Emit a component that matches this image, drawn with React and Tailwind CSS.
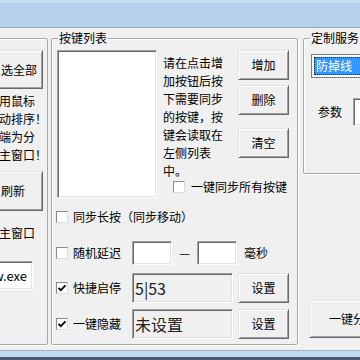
import React from "react";

const font = { fontFamily: '"Noto Sans CJK SC", "Noto Sans", sans-serif' };

const Btn = ({ children, className = "" }) => (
  <div
    className={`flex items-center justify-center bg-[#f0f0f0] text-[12px] text-black border border-t-[#e3e3e3] border-l-[#e3e3e3] border-r-[#696969] border-b-[#696969] shadow-[inset_1px_1px_0_#ffffff,inset_-1px_-1px_0_#a0a0a0] ${className}`}
  >
    {children}
  </div>
);

const Sunken = ({ children, className = "" }) => (
  <div
    className={`border border-t-[#a0a0a0] border-l-[#a0a0a0] border-r-white border-b-white shadow-[inset_1px_1px_0_#696969,inset_-1px_-1px_0_#e3e3e3] ${className}`}
  >
    {children}
  </div>
);

const Check = ({ checked }) => (
  <div className="w-[12px] h-[12px] shrink-0 bg-white border border-t-[#8a8a8a] border-l-[#8a8a8a] border-r-[#dcdcdc] border-b-[#dcdcdc] flex items-center justify-center">
    {checked && (
      <svg width="10" height="10" viewBox="0 0 10 10">
        <path d="M1.5 4.8 L3.8 7.2 L8.5 2.4" stroke="#000" strokeWidth="1.8" fill="none" />
      </svg>
    )}
  </div>
);

const Group = ({ title, className = "", children }) => (
  <fieldset
    className={`border border-[#a8a8a8] rounded-[2px] shadow-[inset_1px_1px_0_#ffffff,1px_1px_0_#ffffff] ${className}`}
  >
    {title && (
      <legend className="ml-[6px] px-[1px] text-[12px] leading-[14px] text-black">{title}</legend>
    )}
    {children}
  </fieldset>
);

export default function App() {
  const tip = ["请在点击增", "加按钮后按", "下需要同步", "的按键，按", "键会读取在", "左侧列表", "中。"];
  const leftTip = ["使用鼠标", "拖动排序！", "左端为分", "为主窗口！"];

  return (
    <div className="w-[360px] h-[360px] overflow-hidden bg-[#f0f0f0] flex flex-col" style={font}>
      <div className="h-[28px] shrink-0 bg-[#b5d0ea] border-t-[3px] border-t-[#c6dcef] border-b border-b-[#93abc3]" />

      <div className="flex-1 flex pt-[3px] min-h-0">
        {/* left panel (clipped) */}
        <div className="w-[48px] shrink-0 overflow-hidden pt-[7px]">
          <Group className="w-[68px] -ml-[20px] h-[307px]">
            <div className="flex flex-col">
              <Btn className="ml-[2px] mt-[11px] w-[60px] h-[39px]">反选全部</Btn>
              <div className="ml-[6px] mt-[3px] text-[12px] leading-[18px] whitespace-nowrap text-black">
                {leftTip.map((t) => (
                  <div key={t}>{t}</div>
                ))}
              </div>
              <Btn className="ml-[2px] mt-[7px] w-[60px] h-[40px]">刷新</Btn>
              <div className="ml-[6px] mt-[13px] text-[12px] leading-[18px] whitespace-nowrap text-black">设主窗口</div>
              <Sunken className="ml-[2px] mt-[19px] w-[50px] h-[29px] bg-white flex items-center justify-end pr-[5px] text-[13px] text-black">
                w.exe
              </Sunken>
            </div>
          </Group>
        </div>

        {/* middle panel */}
        <div className="w-[247px] shrink-0 ml-[3px]">
          <Group title="按键列表" className="w-[247px] h-[314px]">
            <div className="flex flex-col">
              <div className="flex items-start pl-[5px] pt-[5px]">
                <Sunken className="w-[100px] h-[148px] bg-white" />
                <div className="flex flex-col">
                  <div className="flex items-start">
                    <div className="ml-[6px] mt-[4px] w-[66px] text-[12px] leading-[18px] whitespace-nowrap text-black">
                      {tip.map((t) => (
                        <div key={t}>{t}</div>
                      ))}
                    </div>
                    <div className="ml-[9px] flex flex-col">
                      <Btn className="w-[51px] h-[30px]">增加</Btn>
                      <Btn className="w-[51px] h-[30px] mt-[5px]">删除</Btn>
                      <Btn className="w-[51px] h-[30px] mt-[13px]">清空</Btn>
                    </div>
                  </div>
                  <div className="flex items-center h-[14px] ml-[16px] gap-[6px] text-[12px] text-black whitespace-nowrap">
                    <Check />
                    <span>一键同步所有按键</span>
                  </div>
                </div>
              </div>

              <div className="flex items-center h-[14px] mt-[12px] pl-[4px] gap-[5px] text-[12px] text-black whitespace-nowrap">
                <Check />
                <span>同步长按（同步移动）</span>
              </div>

              <div className="flex items-center h-[24px] mt-[17px] pl-[4px] text-[12px] text-black whitespace-nowrap">
                <Check />
                <span className="ml-[5px] w-[59px]">随机延迟</span>
                <Sunken className="w-[40px] h-[24px] bg-white" />
                <span className="w-[25px] text-center">—</span>
                <Sunken className="w-[40px] h-[24px] bg-white" />
                <span className="ml-[7px]">毫秒</span>
              </div>

              <div className="flex items-center h-[30px] mt-[8px] pl-[4px] text-[12px] text-black whitespace-nowrap">
                <Check checked />
                <span className="ml-[5px] w-[59px]">快捷启停</span>
                <Sunken className="w-[101px] h-[30px] bg-[#f0f0f0] flex items-center pl-[2px] text-[16px] text-[#222]">
                  5|53
                </Sunken>
                <Btn className="ml-[5px] w-[51px] h-[30px]">设置</Btn>
              </div>

              <div className="flex items-center h-[30px] mt-[6px] pl-[4px] text-[12px] text-black whitespace-nowrap">
                <Check checked />
                <span className="ml-[5px] w-[59px]">一键隐藏</span>
                <Sunken className="w-[101px] h-[30px] bg-[#f0f0f0] flex items-center pl-[2px] text-[16px] text-[#222]">
                  未设置
                </Sunken>
                <Btn className="ml-[5px] w-[51px] h-[30px]">设置</Btn>
              </div>
            </div>
          </Group>
        </div>

        {/* right panel (clipped) */}
        <div className="ml-[5px] flex-1 min-w-0 overflow-hidden">
          <div className="w-[110px] flex flex-col">
            <Group title="定制服务" className="w-[110px] h-[143px]">
              <div className="flex flex-col">
                <div className="ml-[7px] mt-[9px] h-[24px] w-[100px] bg-white border border-[#7a7a7a] p-[2px]">
                  <div className="h-full bg-[#3399ff] outline-1 outline-dotted outline-[#1a1a1a] -outline-offset-1 flex items-center pl-[2px] text-[12px] text-white whitespace-nowrap">
                    防掉线
                  </div>
                </div>
                <div className="flex items-center mt-[20px] ml-[14px] whitespace-nowrap">
                  <span className="text-[12px] text-black w-[35px]">参数</span>
                  <Sunken className="w-[60px] h-[28px] bg-white" />
                </div>
              </div>
            </Group>
            <Btn className="ml-[6px] mt-[126px] w-[88px] h-[38px] whitespace-nowrap">一键分离</Btn>
          </div>
        </div>
      </div>

      <div className="h-[10px] shrink-0 bg-[#c2d8ed] border-t border-t-[#9fb2c6] border-b-[3px] border-b-[#4a5a6c]" />
    </div>
  );
}
